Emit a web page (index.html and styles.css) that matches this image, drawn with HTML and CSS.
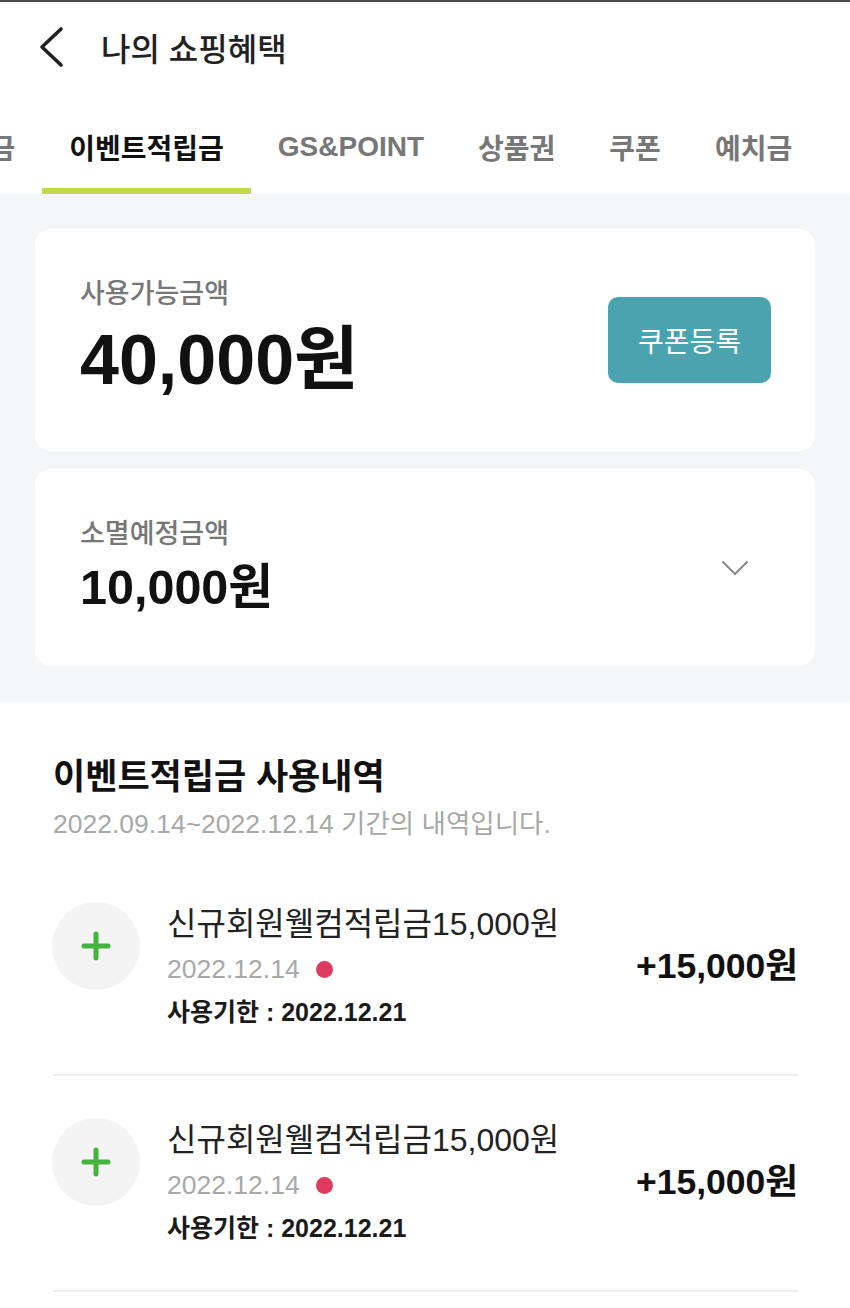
FILE: index.html
```html
<!DOCTYPE html>
<html lang="ko">
<head>
    <meta charset="UTF-8">
    <meta name="viewport" content="width=device-width, initial-scale=1.0">
    <title>나의 쇼핑혜택</title>
    <link rel="stylesheet" href="styles.css">
</head>
<body>
    <div class="page">
        <header class="header">
            <svg class="back" width="28" height="42" viewBox="0 0 28 42">
                <polyline points="23,3 4,21 23,39" fill="none" stroke="#222" stroke-width="3.6" stroke-linecap="round" stroke-linejoin="round"/>
            </svg>
            <h1 class="title">나의 쇼핑혜택</h1>
        </header>

        <nav class="tabs">
            <div class="tab">적립금</div>
            <div class="tab active">이벤트적립금</div>
            <div class="tab">GS&amp;POINT</div>
            <div class="tab">상품권</div>
            <div class="tab">쿠폰</div>
            <div class="tab">예치금</div>
        </nav>

        <section class="summary">
            <div class="card card-balance">
                <div class="card-info">
                    <div class="card-label">사용가능금액</div>
                    <div class="balance">40,000원</div>
                </div>
                <button class="coupon-button">쿠폰등록</button>
            </div>
            <div class="card card-expire">
                <div class="card-info">
                    <div class="card-label">소멸예정금액</div>
                    <div class="expire-amount">10,000원</div>
                </div>
                <svg class="chevron" width="28" height="16" viewBox="0 0 28 16">
                    <polyline points="1.5,1.5 14,14 26.5,1.5" fill="none" stroke="#8a8a8a" stroke-width="2"/>
                </svg>
            </div>
        </section>

        <section class="history">
            <h2 class="history-title">이벤트적립금 사용내역</h2>
            <p class="history-period">2022.09.14~2022.12.14 기간의 내역입니다.</p>

            <ul class="history-list">
                <li class="history-item">
                    <div class="item-icon">
                        <svg width="30" height="30" viewBox="0 0 30 30">
                            <path d="M15 3 V27 M3 15 H27" stroke="#45b33d" stroke-width="5" stroke-linecap="round"/>
                        </svg>
                    </div>
                    <div class="item-body">
                        <div class="item-name">신규회원웰컴적립금15,000원</div>
                        <div class="item-date">2022.12.14 <span class="dot"></span></div>
                        <div class="item-limit">사용기한 : 2022.12.21</div>
                    </div>
                    <div class="item-amount">+15,000원</div>
                </li>
                <li class="history-item">
                    <div class="item-icon">
                        <svg width="30" height="30" viewBox="0 0 30 30">
                            <path d="M15 3 V27 M3 15 H27" stroke="#45b33d" stroke-width="5" stroke-linecap="round"/>
                        </svg>
                    </div>
                    <div class="item-body">
                        <div class="item-name">신규회원웰컴적립금15,000원</div>
                        <div class="item-date">2022.12.14 <span class="dot"></span></div>
                        <div class="item-limit">사용기한 : 2022.12.21</div>
                    </div>
                    <div class="item-amount">+15,000원</div>
                </li>
            </ul>
        </section>
    </div>
</body>
</html>
```

FILE: styles.css
```css
body {
    margin: 0;
    font-family: "Liberation Sans", "Noto Sans CJK KR", sans-serif;
    background: #fff;
    color: #222;
}

.page {
    width: 850px;
    border-top: 2px solid #4a4a4a;
    overflow: hidden;
}

.header {
    height: 89px;
    display: flex;
    align-items: center;
    padding-left: 38px;
}

.back {
    margin-right: 35px;
}

.title {
    margin: 0;
    font-size: 32px;
    font-weight: 500;
    color: #222;
    font-family: "Noto Sans CJK KR", sans-serif;
}

.tabs {
    display: flex;
    height: 103px;
    margin-left: -89px;
}

.tab {
    display: flex;
    align-items: center;
    padding: 14px 27px 0;
    border-bottom: 6px solid transparent;
    font-size: 28px;
    font-weight: 700;
    color: #777;
    white-space: nowrap;
}

.tab.active {
    color: #111;
    border-bottom-color: #c3d94b;
}

.summary {
    background: #f5f6f8;
    padding: 35px 35px 36px;
    display: flex;
    flex-direction: column;
    gap: 18px;
}

.card {
    background: #fff;
    border-radius: 16px;
    display: flex;
    align-items: center;
    justify-content: space-between;
    padding: 0 44px 0 45px;
}

.card-balance {
    height: 222px;
}

.card-expire {
    height: 197px;
}

.card-label {
    font-family: "Noto Sans CJK KR", sans-serif;
    font-size: 27px;
    font-weight: 500;
    line-height: 34px;
    color: #777;
}

.card-balance .card-info {
    margin-bottom: 10px;
}

.balance {
    margin-top: 16px;
    font-size: 70px;
    font-weight: 700;
    line-height: 70px;
    color: #111;
}

.card-expire .card-info {
    margin-bottom: 8px;
}

.expire-amount {
    margin-top: 12px;
    font-size: 48.5px;
    font-weight: 700;
    line-height: 52px;
    color: #111;
}

.coupon-button {
    width: 163px;
    height: 86px;
    border: none;
    border-radius: 10px;
    background: #4ba3b0;
    color: #fff;
    font-family: "Noto Sans CJK KR", sans-serif;
    font-size: 28px;
    cursor: pointer;
}

.chevron {
    margin-right: 22px;
}

.history {
    padding: 54px 52px 0 53px;
}

.history-title {
    margin: 0;
    font-size: 35px;
    font-weight: 700;
    line-height: 42px;
    color: #111;
}

.history-period {
    margin: 10px 0 0;
    font-size: 26.5px;
    line-height: 32px;
    color: #a8a8a8;
}

.history-list {
    list-style: none;
    margin: 20px 0 0;
    padding: 0;
}

.history-item {
    display: flex;
    align-items: flex-start;
    padding: 42px 0 45px;
    border-bottom: 2px solid #eeeeee;
}

.item-icon {
    width: 88px;
    height: 88px;
    border-radius: 50%;
    background: #f4f4f5;
    display: flex;
    align-items: center;
    justify-content: center;
    flex-shrink: 0;
    margin-left: -1px;
}

.item-body {
    flex: 1;
    margin-left: 27px;
}

.item-name {
    font-size: 32px;
    line-height: 44px;
    color: #222;
}

.item-date {
    margin-top: 5px;
    font-size: 26.5px;
    line-height: 36px;
    color: #a8a8a8;
    display: flex;
    align-items: center;
}

.dot {
    width: 17px;
    height: 17px;
    border-radius: 50%;
    background: #e03a60;
    margin-left: 16px;
}

.item-limit {
    margin-top: 8px;
    font-size: 25px;
    font-weight: 700;
    line-height: 34px;
    color: #1a1a1a;
}

.item-amount {
    align-self: center;
    font-size: 35.5px;
    font-weight: 700;
    line-height: 44px;
    color: #111;
}
```
